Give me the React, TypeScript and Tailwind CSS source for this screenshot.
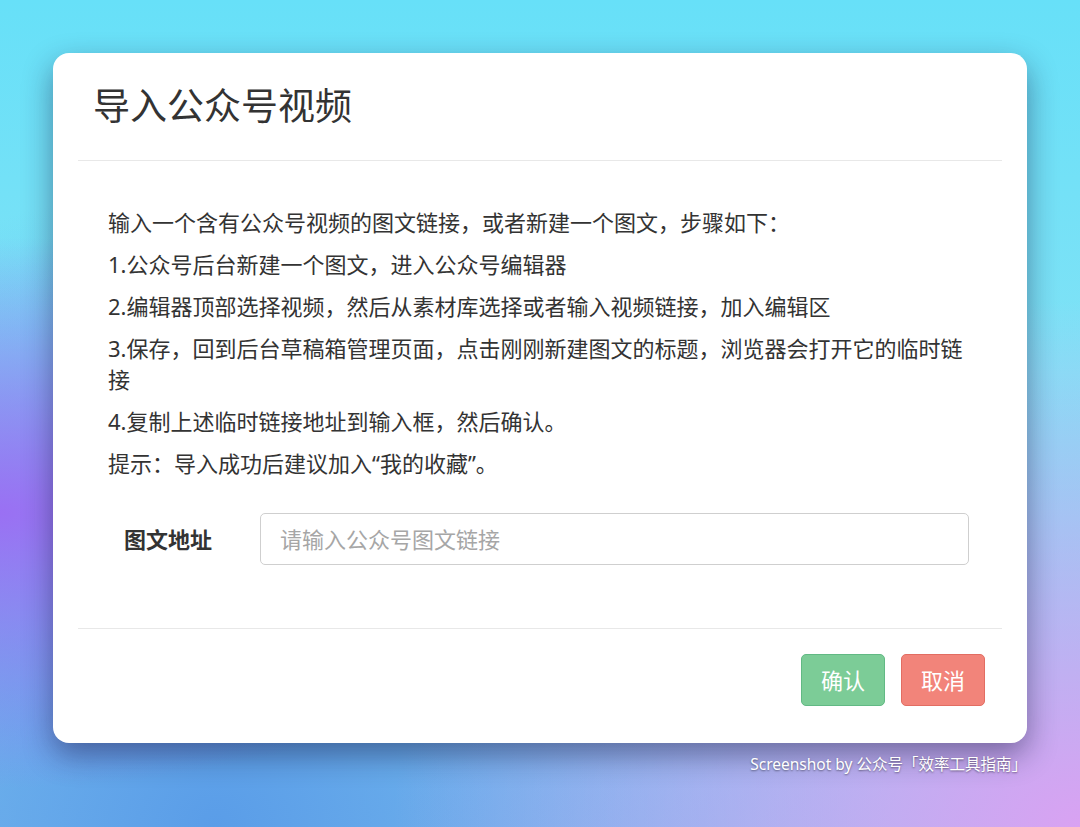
const steps = [
  '输入一个含有公众号视频的图文链接，或者新建一个图文，步骤如下：',
  '1.公众号后台新建一个图文，进入公众号编辑器',
  '2.编辑器顶部选择视频，然后从素材库选择或者输入视频链接，加入编辑区',
  '3.保存，回到后台草稿箱管理页面，点击刚刚新建图文的标题，浏览器会打开它的临时链接',
  '4.复制上述临时链接地址到输入框，然后确认。',
  '提示：导入成功后建议加入“我的收藏”。',
]

export default function App() {
  return (
    <div
      className="flex min-h-[827px] w-full flex-col bg-[image:radial-gradient(ellipse_at_0%_62%,#9a70f3_0%,rgba(154,112,243,0)_38%),radial-gradient(ellipse_at_100%_100%,#d9a2f2_0%,rgba(217,162,242,0)_45%),radial-gradient(ellipse_at_20%_100%,#5a9de8_0%,rgba(90,157,232,0)_55%),linear-gradient(180deg,#67e0f8_0%,#80e2f6_45%,#86c8f0_100%)] px-[53px] pt-[53px] font-['Noto_Sans','Noto_Sans_CJK_SC',sans-serif] text-[#333]"
    >
      <div className="rounded-[16px] bg-white px-[25px] shadow-[0_12px_30px_rgba(20,20,60,0.45)]">
        <div className="border-b border-[#e8e8e8] pb-[32px] pl-[15px] pt-[31px]">
          <h1 className="text-[37px] leading-[44px] font-normal">导入公众号视频</h1>
        </div>

        <div className="pb-[63px] pl-[30px] pr-[30px] pt-[46px]">
          {steps.map((line) => (
            <p key={line} className="mb-[11px] text-[22px] leading-[31px]">
              {line}
            </p>
          ))}

          <div className="mt-[34px] flex items-center">
            <label className="w-[152px] shrink-0 pl-[16px] text-[22px] font-bold" htmlFor="article-url">
              图文地址
            </label>
            <input
              className="h-[52px] w-[709px] rounded-[5px] border border-[#cfcfcf] px-[19px] text-[22px] outline-none placeholder:text-[#a6a6a6]"
              id="article-url"
              placeholder="请输入公众号图文链接"
              type="text"
            />
          </div>
        </div>

        <div className="flex justify-end gap-[16px] border-t border-[#e8e8e8] pb-[37px] pr-[17px] pt-[25px]">
          <button className="h-[52px] w-[84px] rounded-[5px] border border-[#62b984] bg-[#7ccc97] text-[22px] text-white">
            确认
          </button>
          <button className="h-[52px] w-[84px] rounded-[5px] border border-[#e26d62] bg-[#f2847a] text-[22px] text-white">
            取消
          </button>
        </div>
      </div>

      <p className="mt-[10px] text-right text-[15.5px] text-white [text-shadow:0_1px_2px_rgba(0,0,0,0.45)]">
        Screenshot by 公众号「效率工具指南」
      </p>
    </div>
  )
}
